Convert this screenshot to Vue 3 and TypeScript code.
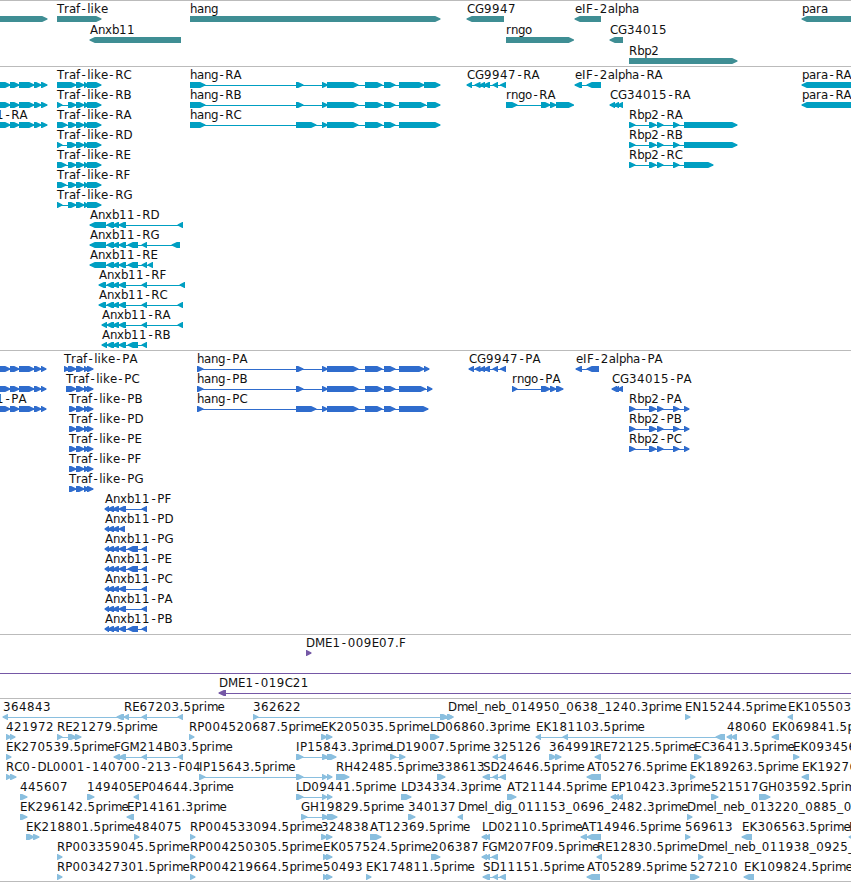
<script setup lang="ts">
type Strand = '>' | '<'
type Entry = [label: string, x: number, strand: Strand, blocks: string]
interface Track {
  id: string
  color: string
  pitch: number
  height: number
  rows: Entry[][]
  solid?: boolean
}

const WIDTH = 851
const FIRST_BAR = 16
const BAR = 6
const HEAD = 5.5

const trafTail = ' 76:84 84:88 87:101'
const trafCds = '69:76 76:84 84:89 87:93'
const hangMid = ' 322:327.5 327:358 365:382 384:395 '
const anx = ' 107:114 113:119 119:126'
const anxCds = '105:109 108:114 113:119 119:126'
const left = '-8:10 10:19 19:34 34:41 41:47'
const leftCds = '-8:10 10:19 19:34 34:41 41:46'
const cg9947 = ' 475:480.5 480:485 484:490 493:498 500.5:506'
const rbp = '629:635 649:656 657:663 673:679 '

const tracks: Track[] = [
  {
    id: 'genes', color: '#3f8e94', pitch: 21, height: 66, solid: true,
    rows: [
      [['', 0, '>', '-10:47'], ['Traf-like', 57, '>', '57:101'], ['hang', 190, '>', '190:440'], ['CG9947', 467, '<', '467:504'], ['eIF-2alpha', 575, '<', '575:601'], ['para', 802, '<', '802:870']],
      [['Anxb11', 90, '<', '90:181'], ['rngo', 506, '>', '506:573.5'], ['CG34015', 610, '<', '610:623']],
      [['Rbp2', 629, '>', '629:737']],
    ],
  },
  {
    id: 'transcripts', color: '#009fc2', pitch: 20, height: 284,
    rows: [
      [['', 0, '>', left], ['Traf-like-RC', 57, '>', '57:76' + trafTail], ['hang-RA', 190, '>', '190:205 296:303' + hangMid + '399:424 424:440'], ['CG9947-RA', 467, '<', '467:472' + cg9947], ['eIF-2alpha-RA', 575, '<', '575:582 587:601'], ['para-RA', 802, '<', '802:870']],
      [['', 0, '>', left], ['Traf-like-RB', 57, '>', '57:62 68:76' + trafTail], ['hang-RB', 190, '>', '190:205 296:303' + hangMid + '399:425.5 427:440'], ['rngo-RA', 506, '>', '506:517 541:550 550:556 556:573.5'], ['CG34015-RA', 610, '<', '610:615 614:619 618:623'], ['para-RA', 802, '<', '802:870']],
      [['1-RA', -4, '>', left], ['Traf-like-RA', 57, '>', '57:67 68:76' + trafTail], ['hang-RC', 190, '>', '190:205 296:316' + hangMid + '399:440'], ['Rbp2-RA', 629, '>', rbp + '684:737']],
      [['Traf-like-RD', 57, '>', '57:62 67:76' + trafTail], ['Rbp2-RB', 629, '>', rbp + '684:737']],
      [['Traf-like-RE', 57, '>', '57:66 68:76' + trafTail], ['Rbp2-RC', 629, '>', rbp + '684:713']],
      [['Traf-like-RF', 57, '>', '57:66 68:76' + trafTail]],
      [['Traf-like-RG', 57, '>', '57:62 68:76' + trafTail]],
      [['Anxb11-RD', 90, '<', '90:106' + anx + ' 178:183']],
      [['Anxb11-RG', 90, '<', '90:106' + anx + ' 128:138 142:147 172:180']],
      [['Anxb11-RE', 90, '<', '90:106' + anx + ' 128:138 142:147 148:153']],
      [['Anxb11-RF', 99, '<', '99:106' + anx + ' 142:147 180:185']],
      [['Anxb11-RC', 99, '<', '99:106' + anx + ' 142:147 178:183']],
      [['Anxb11-RA', 102, '<', '102:107' + anx + ' 142:147 178:183']],
      [['Anxb11-RB', 102, '<', '102:107' + anx + ' 128:138 142:147']],
    ],
  },
  {
    id: 'proteins', color: '#2f6ccd', pitch: 20, height: 284,
    rows: [
      [['', 0, '>', leftCds], ['Traf-like-PA', 64, '>', '64:69 68:76 76:84 84:88 87:93'], ['hang-PA', 197, '>', '197:203 296:303' + hangMid + '399:424 424:429'], ['CG9947-PA', 469, '<', '469:474' + cg9947], ['eIF-2alpha-PA', 576, '<', '576:582 587:599']],
      [['', 0, '>', leftCds], ['Traf-like-PC', 66, '>', '66:76 76:84 84:89 87:93'], ['hang-PB', 197, '>', '197:203 296:303' + hangMid + '399:425.5 427:432'], ['rngo-PA', 512, '>', '512:517 541:550 550:556 556:563'], ['CG34015-PA', 612, '<', '612:617 615:619 618:623']],
      [['1-PA', -4, '>', leftCds], ['Traf-like-PB', 69, '>', trafCds], ['hang-PC', 197, '>', '197:203 296:316' + hangMid + '399:428'], ['Rbp2-PA', 629, '>', rbp + '684:689']],
      [['Traf-like-PD', 69, '>', trafCds], ['Rbp2-PB', 629, '>', rbp + '684:689']],
      [['Traf-like-PE', 69, '>', trafCds], ['Rbp2-PC', 629, '>', rbp + '684:689']],
      [['Traf-like-PF', 69, '>', trafCds]],
      [['Traf-like-PG', 69, '>', trafCds]],
      [['Anxb11-PF', 105, '<', anxCds + ' 142:147']],
      [['Anxb11-PD', 105, '<', '105:109 108:114 113:119 119:125']],
      [['Anxb11-PG', 105, '<', anxCds + ' 128:138 142:147']],
      [['Anxb11-PE', 105, '<', anxCds + ' 128:138 142:147']],
      [['Anxb11-PC', 105, '<', anxCds + ' 142:147']],
      [['Anxb11-PA', 105, '<', anxCds + ' 142:147']],
      [['Anxb11-PB', 105, '<', anxCds + ' 128:138 142:147']],
    ],
  },
  {
    id: 'clones', color: '#7558a6', pitch: 20, height: 64,
    rows: [
      [['DME1-009E07.F', 306, '>', '306:311']],
      [['', 0, '>', '-20:-10 900:910']],
      [['DME1-019C21', 219, '<', '219:226 900:910']],
    ],
  },
  {
    id: 'ests', color: '#8abfdf', pitch: 20, height: 184,
    rows: [
      [['364843', 3, '<', '3:8 117:124'], ['RE67203.5prime', 124, '<', '124:129 142:147 178:183'], ['362622', 253, '>', '253:258 440:448 447:453'], ['Dmel_neb_014950_0638_1240.3prime', 448, '>', '448:453'], ['EN15244.5prime', 685, '>', '685:690'], ['EK105503', 788, '<', '788:793']],
      [['421972', 6, '>', '6:11 10:15'], ['RE21279.5prime', 57, '>', '57:62 68:76 75:81'], ['RP004520687.5prime', 189, '>', '189:194'], ['EK205035.5prime', 321, '>', '321:327 326:332'], ['LD06860.3prime', 430, '>', '430:439'], ['EK181103.5prime', 536, '<', '536:541 563:568 716:725'], ['48060', 727, '<', '727:732 731:737'], ['EK069841.5prime', 772, '<', '772:779']],
      [['EK270539.5prime', 6, '>', '6:11'], ['FGM214B03.5prime', 114, '<', '114:120 119:126 142:147 178:183'], ['IP15843.3prime', 296, '>', '296:303 322:328 327:336'], ['LD19007.5prime', 390, '>', '390:396 399:405'], ['325126', 493, '<', '493:498 500:506'], ['364991', 549, '>', '549:556 555:561'], ['RE72125.5prime', 595, '<', '595:601'], ['EC36413.5prime', 694, '>', '694:701'], ['EK093456', 793, '>', '793:799']],
      [['RC0-DL0001-140700-213-F04', 6, '>', '6:11 10:16'], ['IP15643.5prime', 199, '>', '199:205 296:303 322:327 327:332'], ['RH42485.5prime', 336, '>', '336:349'], ['338613', 437, '>', '437:445'], ['SD24646.5prime', 483, '<', '483:490 493:498 500:506'], ['AT05276.5prime', 587, '<', '587:601'], ['EK189263.5prime', 690, '>', '690:695'], ['EK19276', 802, '<', '802:809']],
      [['445607', 20, '>', '20:27'], ['149405', 87, '>', '87:94'], ['EP04644.3prime', 134, '<', '134:139'], ['LD09441.5prime', 296, '>', '296:303 322:327 327:332'], ['LD34334.3prime', 401, '>', '401:411'], ['AT21144.5prime', 507, '>', '507:516'], ['EP10423.3prime', 611, '<', '611:616 614:619 618:623'], ['521517', 711, '>', '711:718'], ['GH03592.5prime', 759, '>', '759:770']],
      [['EK296142.5prime', 20, '>', '20:27'], ['EP14161.3prime', 127, '<', '127:134'], ['GH19829.5prime', 301, '>', '301:307 322:328 327:337'], ['340137', 408, '>', '408:415'], ['Dmel_dig_011153_0696_2482.3prime', 458, '<', '458:463'], ['Dmel_neb_013220_0885_0', 687, '>', '687:692']],
      [['EK218801.5prime', 26, '>', '26:34 33:39'], ['484075', 134, '>', '134:139'], ['RP004533094.5prime', 190, '>', '190:195'], ['324838', 321, '>', '321:327 326:332'], ['AT12369.5prime', 370, '>', '370:381'], ['LD02110.5prime', 482, '<', '482:487 485:490'], ['AT14946.5prime', 581, '<', '581:587 587:601'], ['569613', 685, '>', '685:690'], ['EK306563.5prime', 742, '<', '742:752'], ['E', 849, '<', '849:856']],
      [['RP003359045.5prime', 57, '>', '57:62'], ['RP004250305.5prime', 190, '>', '190:195'], ['EK057524.5prime', 323, '>', '323:328 326:332'], ['206387', 431, '>', '431:440'], ['FGM207F09.5prime', 482, '<', '482:487 485:490 492:498'], ['RE12830.5prime', 597, '<', '597:602'], ['Dmel_neb_011938_0925_', 698, '>', '698:703']],
      [['RP003427301.5prime', 57, '>', '57:62'], ['RP004219664.5prime', 190, '>', '190:195'], ['50493', 323, '>', '323:328 326:332'], ['EK174811.5prime', 366, '>', '366:371'], ['SD11151.5prime', 483, '<', '483:490 493:498 500:506'], ['AT05289.5prime', 587, '<', '587:600'], ['527210', 690, '>', '690:699'], ['EK109824.5prime', 744, '<', '744:754']],
    ],
  },
]

// Advances of the label face, in pixels; anything not listed is 8 wide.
const ADVANCE: Record<string, number> = {
  '.': 4, '-': 7.3, _: 6.5, A: 8, B: 8, C: 8, D: 9, E: 7.4, F: 6.5, G: 9, H: 9, I: 4, K: 8.2, L: 6.2,
  M: 10, N: 9, P: 7.2, R: 8.2, S: 7.4, T: 7, a: 7, b: 7, d: 7, e: 7, f: 4, g: 7, h: 7, i: 3.4, k: 7,
  l: 3.2, m: 10.5, n: 7, o: 7, p: 7.1, r: 5, x: 7,
}

function glyphX(label: string, x: number): string {
  let pen = x
  return [...label]
    .map((ch) => {
      // The hyphen is narrower than its cell, so it is centred in it.
      const at = ch === '-' ? pen + 1.4 : pen
      pen += ADVANCE[ch] ?? 8
      return at.toFixed(1)
    })
    .join(' ')
}

function parse(blocks: string): number[][] {
  return blocks.split(' ').map((b) => b.split(':').map(Number))
}

function arrows(blocks: string, strand: Strand, y: number): string {
  const mid = y + BAR / 2
  const low = y + BAR
  return parse(blocks)
    .map(([s, e]) => {
      const head = Math.min(HEAD, e - s)
      return strand === '>'
        ? `M${s} ${y}H${e - head + 0.7}L${e + 0.5} ${mid - 0.4}V${mid + 0.6}L${e - head + 0.7} ${low}H${s}Z`
        : `M${e} ${y}H${s + head - 0.7}L${s - 0.5} ${mid - 0.4}V${mid + 0.6}L${s + head - 0.7} ${low}H${e}Z`
    })
    .join('')
}

const drawn = tracks.map((t) => ({
  ...t,
  features: t.rows.flatMap((row, r) =>
    row.map(([label, x, strand, blocks]) => {
      const y = FIRST_BAR + r * t.pitch
      const spans = parse(blocks)
      const start = spans[0][0]
      return {
        label,
        xs: glyphX(label, x),
        y,
        start,
        length: spans[spans.length - 1][1] - start,
        path: arrows(blocks, strand, y),
      }
    }),
  ),
}))
</script>

<template>
  <main class="browser">
    <section v-for="t in drawn" :key="t.id" :class="['track', t.id]">
      <svg :width="WIDTH" :height="t.height - 1" :viewBox="`0 1 ${WIDTH} ${t.height - 1}`">
        <g v-for="(f, i) in t.features" :key="i">
          <rect v-if="!t.solid" :x="f.start" :y="f.y + 3" :width="f.length" height="1" :fill="t.color" />
          <path :d="f.path" :fill="t.color" />
          <text v-if="f.label" :x="f.xs" :y="f.y - 3">{{ f.label }}</text>
        </g>
      </svg>
    </section>
  </main>
</template>

<style>
body {
  background: #fff;
  overflow: hidden;
}
</style>

<style scoped>
.browser {
  display: flex;
  flex-direction: column;
  width: 851px;
  height: 882px;
  overflow: hidden;
  background: #fff;
}
.track {
  flex: none;
  border-top: 1px solid #bbb;
}
.track.ests {
  box-sizing: border-box;
  height: 184px;
  border-bottom: 1px solid #bbb;
}
svg {
  display: block;
}
text {
  font-family: 'DejaVu Sans', sans-serif;
  font-size: 11.8px;
  fill: #111;
  white-space: pre;
}
</style>
